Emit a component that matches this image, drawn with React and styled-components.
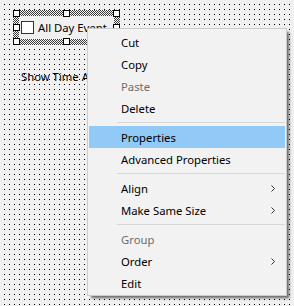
import styled, { createGlobalStyle } from "styled-components";

const GlobalStyle = createGlobalStyle`
    html, body {
        margin: 0;
        padding: 0;
    }
    body {
        width: 294px;
        height: 306px;
        overflow: hidden;
        background-color: #f0f0f0;
        background-image: conic-gradient(at 1px 1px, transparent 75%, #000 0);
        background-size: 5px 5px;
        background-position: 4px 4px;
        font-family: "Noto Sans", "Liberation Sans", sans-serif;
        font-size: 11.3px;
    }
`;

const Canvas = styled.div`
    position: relative;
    width: 294px;
    height: 306px;
`;

// selected control: hatched frame with 8 grab handles laid on a grid
const Frame = styled.div`
    position: absolute;
    left: 13px;
    top: 10px;
    width: 107px;
    height: 35px;
    display: grid;
    grid-template-columns: 7px 1fr 7px 1fr 7px;
    grid-template-rows: 7px 1fr 7px 1fr 7px;
    background-image: repeating-conic-gradient(#3a3a3a 0 25%, #f6f6f6 0 50%);
    background-size: 2px 2px;
`;

const Control = styled.div`
    grid-column: 2 / 5;
    grid-row: 2 / 5;
    margin: -1px;
    background: #f0f0f0;
    display: flex;
    align-items: center;
    gap: 4px;
    padding-left: 2px;
    color: #000;
    white-space: nowrap;
`;

const Box = styled.span`
    width: 11px;
    height: 11px;
    border: 1px solid #333;
    background: #fff;
    flex: none;
`;

const Handle = styled.span`
    grid-column: ${(p) => p.$c};
    grid-row: ${(p) => p.$r};
    border: 1px solid #000;
    background: #fff;
`;

const Label = styled.div`
    position: absolute;
    left: 21px;
    top: 69px;
    color: #000;
    white-space: nowrap;
`;

const Menu = styled.div`
    position: absolute;
    left: 87px;
    top: 28px;
    width: 196px;
    padding: 2px 1px 1px;
    background: #f2f2f2;
    border: 1px solid #cccccc;
    box-shadow: 3px 3px 2px -1px rgba(0, 0, 0, 0.45), 4px 4px 3px -1px rgba(0, 0, 0, 0.15);
`;

const Item = styled.div`
    height: 22px;
    display: flex;
    align-items: center;
    padding-left: 32px;
    padding-right: 10px;
    color: ${(p) => (p.$disabled ? "#6d6d6d" : "#000")};
    background: ${(p) => (p.$active ? "#91c9f7" : "transparent")};
    span {
        flex: 1;
    }
`;

const Separator = styled.div`
    height: 7px;
    display: flex;
    align-items: center;
    padding-left: 28px;
    &::after {
        content: "";
        flex: 1;
        height: 1px;
        background: #d7d7d7;
    }
`;

const Arrow = () => (
    <svg width="4" height="7" viewBox="0 0 4 7">
        <path d="M0.5 0.5 L3.5 3.5 L0.5 6.5" fill="none" stroke="#333" strokeWidth="1" />
    </svg>
);

const menu = [
    { label: "Cut" },
    { label: "Copy" },
    { label: "Paste", disabled: true },
    { label: "Delete" },
    "-",
    { label: "Properties", active: true },
    { label: "Advanced Properties" },
    "-",
    { label: "Align", sub: true },
    { label: "Make Same Size", sub: true },
    "-",
    { label: "Group", disabled: true },
    { label: "Order", sub: true },
    { label: "Edit" },
];

const handles = [
    [1, 1], [3, 1], [5, 1],
    [1, 3], [5, 3],
    [1, 5], [3, 5], [5, 5],
];

const App = () => {
    return (
        <>
            <GlobalStyle />
            <Canvas>
                <Frame>
                    <Control>
                        <Box />
                        All Day Event
                    </Control>
                    {handles.map(([c, r], i) => (
                        <Handle key={i} $c={c} $r={r} />
                    ))}
                </Frame>
                <Label>Show Time As:</Label>
                <Menu>
                    {menu.map((m, i) =>
                        m === "-" ? (
                            <Separator key={i} />
                        ) : (
                            <Item key={i} $disabled={m.disabled} $active={m.active}>
                                <span>{m.label}</span>
                                {m.sub && <Arrow />}
                            </Item>
                        )
                    )}
                </Menu>
            </Canvas>
        </>
    );
};

export default App;
